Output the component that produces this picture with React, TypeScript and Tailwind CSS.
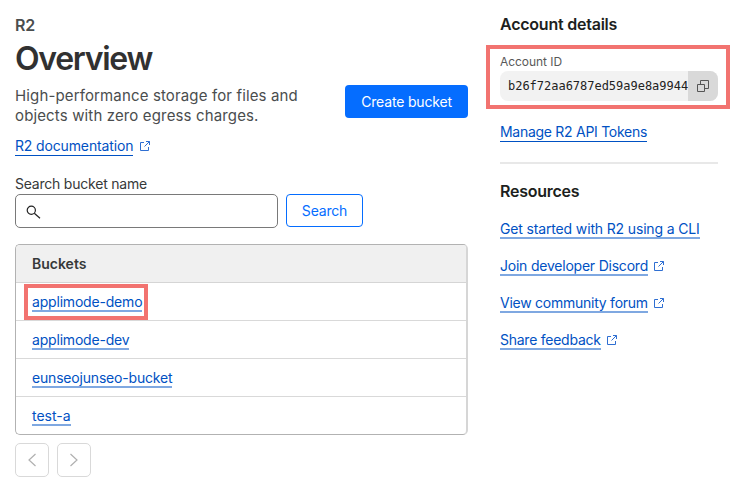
import React from "react";

function External({ className }: { className: string }) {
  return (
    <svg viewBox="0 0 12 12" className={`ml-[5.5px] h-3 w-3 shrink-0 ${className}`} fill="none" stroke="#2f6fd2" strokeWidth="1">
      <path d="M5 2.5H1.5v8h8V7M7 1.5h3.5V5M10.5 1.5L5.5 6.5" />
    </svg>
  );
}

type LinkProps = { children: React.ReactNode; external?: boolean; soft?: boolean; className?: string };

function TextLink({ children, external, soft, className = "tracking-[-0.19px]" }: LinkProps) {
  return (
    <a className="flex items-start text-[14px] text-[#0051c3]">
      <span
        className={`block whitespace-nowrap ${
          soft ? "h-5 border-b-2 border-[#7fa8e1] leading-5" : "h-[19px] border-b border-[#0051c3] leading-[18px]"
        } ${className}`}
      >
        {children}
      </span>
      {external && <External className={soft ? "mt-1" : "mt-[3px]"} />}
    </a>
  );
}

function Pager({ d }: { d: string }) {
  return (
    <button className="flex h-[34px] w-[34px] items-center justify-center rounded-[5px] border border-[#d9d9d9]">
      <svg viewBox="0 0 16 16" className="h-4 w-4" fill="none" stroke="#b0b0b0" strokeWidth="1.2">
        <path d={d} />
      </svg>
    </button>
  );
}

export default function App() {
  return (
    <div className="flex h-[488px] w-[734px] overflow-hidden bg-white pl-[15px] font-['Inter',sans-serif] text-[#36393a] antialiased">
      <main className="w-[453px] pt-[15px]">
        <div className="h-5 text-[16px] leading-5 font-semibold tracking-[-0.2px] text-[#4a4d4e]">R2</div>
        <h1 className="mt-1 h-10 text-[32px] leading-10 font-semibold tracking-[-1.3px] text-[#313131]">Overview</h1>
        <div className="mt-[6px] flex h-[42px] items-start justify-between">
          <p className="mt-px text-[15px] leading-5 tracking-[0.14px] whitespace-nowrap text-[#4a4d4e]">
            High-performance storage for files and
            <br />
            objects with zero egress charges.
          </p>
          <button className="h-[33px] w-[123px] rounded-[4px] bg-[#056dff] text-[14px] tracking-[-0.18px] whitespace-nowrap text-white">
            Create bucket
          </button>
        </div>
        <div className="mt-[10px] h-[19px]">
          <TextLink external className="tracking-[-0.14px]">R2 documentation</TextLink>
        </div>
        <label className="mt-[18px] block h-5 text-[14px] leading-5 tracking-[-0.22px] text-[#36393a]">
          Search bucket name
        </label>
        <div className="flex items-start gap-2">
          <div className="flex h-[34px] w-[263px] items-center rounded-[5px] border border-[#797979] pl-[10px]">
            <svg viewBox="0 0 16 16" className="mt-1 h-4 w-4" fill="none" stroke="#222" strokeWidth="1.2">
              <circle cx="5.3" cy="5.3" r="4.1" />
              <path d="M8.3 8.3L14 13.2" />
            </svg>
          </div>
          <button className="h-[33px] w-[77px] rounded-[4px] border border-[#056dff] text-[14px] tracking-[-0.2px] text-[#056dff]">
            Search
          </button>
        </div>
        <section className="mt-4 h-[191px] overflow-hidden rounded-[5px] border border-r-2 border-[#b2b2b2] border-r-[#d6d6d6]">
          <div className="h-[38px] border-b border-[#d5d5d5] bg-[#f0f0f0] pl-4 text-[14px] leading-[37px] font-semibold">
            Buckets
          </div>
          <div className="relative h-[38px] border-b border-[#d9d9d9] pt-[9px] pl-4">
            <TextLink soft>applimode-demo</TextLink>
            <div className="absolute top-[1px] left-2 h-9 w-[124px] border-4 border-[#f27370]" />
          </div>
          <div className="h-[38px] border-b border-[#d9d9d9] pt-[9px] pl-4">
            <TextLink soft>applimode-dev</TextLink>
          </div>
          <div className="h-[38px] border-b border-[#d9d9d9] pt-[9px] pl-4">
            <TextLink soft>eunseojunseo-bucket</TextLink>
          </div>
          <div className="h-[37px] pt-[9px] pl-4">
            <TextLink soft className="tracking-normal">test-a</TextLink>
          </div>
        </section>
        <div className="mt-2 flex gap-2">
          <Pager d="M11.5 2L5 8l6.5 6" />
          <Pager d="M4.5 2L11 8l-6.5 6" />
        </div>
      </main>
      <aside className="ml-[18px] w-[244px] pt-[14px]">
        <h2 className="ml-[14px] h-5 text-[16px] leading-5 font-semibold tracking-[-0.23px] text-[#1d1f20]">
          Account details
        </h2>
        <div className="mt-[11px] h-16 border-4 border-[#f27370] pt-1 pl-[10px]">
          <div className="h-[18px] text-[12px] leading-[18px] tracking-[-0.05px] text-[#595959]">Account ID</div>
          <div className="flex h-[30px] w-[218px] overflow-hidden rounded-[8px] bg-[#f2f2f2]">
            <div className="w-[188px] overflow-hidden pl-2 font-['DejaVu_Sans_Mono',monospace] text-[12px] leading-[31px] tracking-[-0.02px] whitespace-nowrap text-[#222]">
              b26f72aa6787ed59a9e8a9944
            </div>
            <div className="flex w-[30px] items-center justify-center bg-[#d9d9d9]">
              <svg viewBox="0 0 14 14" className="h-3.5 w-3.5" fill="none" stroke="#555" strokeWidth="1">
                <path d="M1.5 5.5h7v7h-7zM4.5 5.5v-4h8v8h-4" />
              </svg>
            </div>
          </div>
        </div>
        <div className="ml-[14px] w-[218px]">
          <div className="h-[55px] border-b-2 border-[#e8e8e8] pt-[14px]">
            <TextLink className="tracking-[-0.28px]">Manage R2 API Tokens</TextLink>
          </div>
          <h2 className="mt-[17px] h-5 text-[16px] leading-5 font-semibold tracking-[-0.25px] text-[#1d1f20]">
            Resources
          </h2>
          <nav className="mt-[18px] flex flex-col gap-[17px]">
            <TextLink soft className="tracking-[-0.15px]">Get started with R2 using a CLI</TextLink>
            <TextLink soft external className="tracking-[-0.22px]">Join developer Discord</TextLink>
            <TextLink soft external className="tracking-[-0.25px]">View community forum</TextLink>
            <TextLink soft external className="tracking-[-0.25px]">Share feedback</TextLink>
          </nav>
        </div>
      </aside>
    </div>
  );
}
